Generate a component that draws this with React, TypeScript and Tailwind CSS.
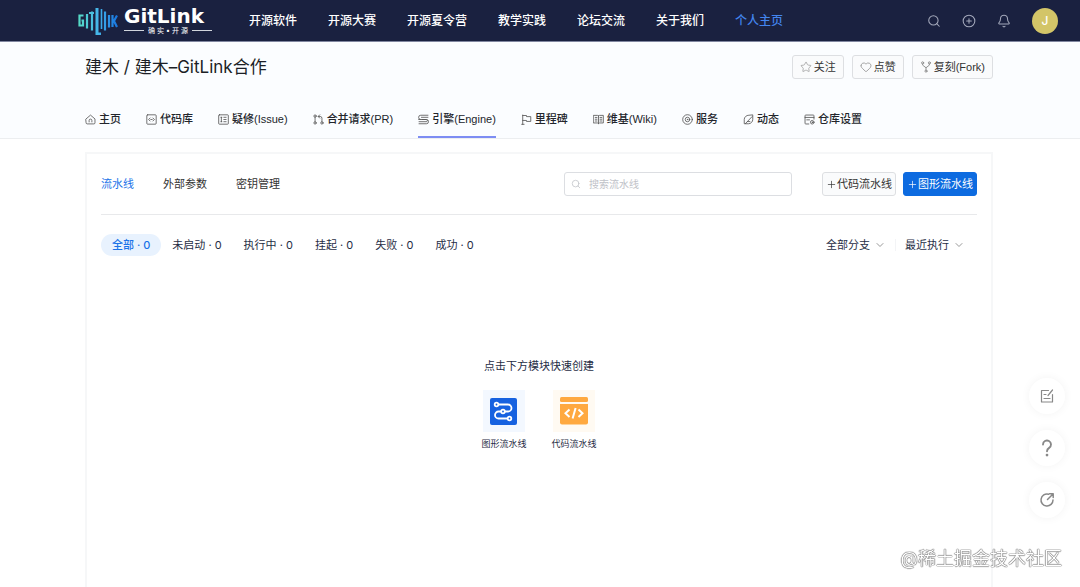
import type { ReactNode } from 'react';
import { Bell, ChevronDown, CirclePlus, Heart, Plus, Search, Star } from 'lucide-react';

const navLinks = ['开源软件', '开源大赛', '开源夏令营', '教学实践', '论坛交流', '关于我们', '个人主页'];

const filters = ['全部', '未启动', '执行中', '挂起', '失败', '成功'];

function Icon({ children, className = 'size-3' }: { children: ReactNode; className?: string }) {
    return (
        <svg
            viewBox="0 0 16 16"
            fill="none"
            stroke="currentColor"
            strokeWidth="1.2"
            strokeLinecap="round"
            strokeLinejoin="round"
            className={`shrink-0 ${className}`}
            aria-hidden="true"
        >
            {children}
        </svg>
    );
}

const repoTabs = [
    {
        label: '主页',
        icon: (
            <>
                <path d="M1.5 7.2 8 1.6l6.5 5.6v5.6a1.6 1.6 0 0 1-1.6 1.6H3.1a1.6 1.6 0 0 1-1.6-1.6z" />
                <path d="M6 11.5V9.4a2 2 0 0 1 4 0v2.1" />
            </>
        ),
    },
    {
        label: '代码库',
        icon: (
            <>
                <rect x="1.2" y="1.2" width="13.6" height="13.6" rx="1.2" />
                <path d="M6 5.8 3.8 8 6 10.2M10 5.8 12.2 8 10 10.2M7 8h2" />
            </>
        ),
    },
    {
        label: '疑修(Issue)',
        icon: (
            <>
                <rect x="1" y="1.2" width="14" height="13.6" rx="1" />
                <path d="M4.2 4.8h1.4M4.9 4.8v6.4M4.2 11.2h1.4M8.5 4.8h3.3M8.5 8h3.3M8.5 11.2h3.3" />
            </>
        ),
    },
    {
        label: '合并请求(PR)',
        icon: (
            <>
                <circle cx="3" cy="3" r="1.7" />
                <circle cx="3" cy="13" r="1.7" />
                <circle cx="13" cy="13" r="1.7" />
                <path d="M3 4.7v6.6M13 11.3V6.2A2.6 2.6 0 0 0 10.4 3.6H7.8M9.8 1.2 7.4 3.6l2.4 2.4" />
            </>
        ),
    },
    {
        label: '引擎(Engine)',
        active: true,
        icon: (
            <>
                <path d="M14.5 1.8H4a2.9 2.9 0 0 0 0 6.2h8a1.6 1.6 0 0 1 0 3.2H1.5" />
                <path d="M14.5 4.8H5M6 8h6.2a3 3 0 0 1 0 6.2H1.5M1 8h2.5" />
            </>
        ),
    },
    {
        label: '里程碑',
        icon: <path d="M2.5 15V1.5M2.5 2.2h5.5v1.6h6.2v7H8V9.4H2.5M1 15h3.5" />,
    },
    {
        label: '维基(Wiki)',
        icon: (
            <>
                <path d="M8 2.5v11.5M1 2h5.5L8 2.8 9.5 2H15v11H9.5L8 14l-1.5-1H1z" />
                <path d="M3.2 5h2.6M3.2 7.6h2.6M3.2 10.2h2.6M10.2 5h2.6M10.2 7.6h2.6M10.2 10.2h2.6" />
            </>
        ),
    },
    {
        label: '服务',
        icon: (
            <>
                <circle cx="8" cy="8" r="7" />
                <circle cx="8" cy="8" r="3.3" />
                <circle cx="8" cy="8" r=".4" />
            </>
        ),
    },
    {
        label: '动态',
        icon: (
            <>
                <path d="M14.2 1.8v6A6.3 6.3 0 0 1 8 14.2H1.8V8A6.2 6.2 0 0 1 8 1.8z" />
                <path d="m3.5 14 9.5-10M6.5 11h3.5" />
            </>
        ),
    },
    {
        label: '仓库设置',
        icon: (
            <>
                <path d="M14.5 7.5v-5a1 1 0 0 0-1-1h-11a1 1 0 0 0-1 1v11a1 1 0 0 0 1 1H7M1.5 5h13M4 8.5h4" />
                <circle cx="12" cy="12" r="2.6" />
                <circle cx="12" cy="12" r=".5" />
            </>
        ),
    },
];

function Logo() {
    return (
        <a href="#" className="mr-[37px] flex w-[134px] shrink-0 items-center gap-[6px]" aria-label="GitLink">
            <svg viewBox="0 0 40 28" className="h-7 w-10 shrink-0" aria-hidden="true">
                <defs>
                    <linearGradient id="mark" x1="0" y1="0" x2="40" y2="0" gradientUnits="userSpaceOnUse">
                        <stop offset="0" stopColor="#55dcc4" />
                        <stop offset=".5" stopColor="#45b5ea" />
                        <stop offset="1" stopColor="#1673df" />
                    </linearGradient>
                </defs>
                <g fill="none" stroke="url(#mark)" strokeWidth="2.2">
                    <path d="M5.5 8.5H1.5v10H5v-5H3.5" />
                    <path d="M9.01 7v14.5" />
                    <path d="M11 6h5M14 4.5v19" />
                    <path d="M19 1v26h4" strokeWidth="3" />
                    <path d="M23.5 2v20" strokeWidth="1.6" />
                    <path d="M27.01 4.5v19" />
                    <path d="M31.01 8v12.5" />
                    <path d="M34.51 8v12M39 8.5 36 14l3 6" />
                </g>
            </svg>
            <span className="flex min-w-0 flex-1 flex-col text-white">
                <span className="font-['DejaVu_Sans'] text-[20px] leading-[18px] font-bold">GitLink</span>
                <span className="mt-0.5 flex items-center gap-1 text-[7px] leading-[8px] whitespace-nowrap">
                    <i className="h-px flex-1 bg-gray-300" />
                    确 实 • 开 源
                    <i className="h-px flex-1 bg-gray-300" />
                </span>
            </span>
        </a>
    );
}

function Header() {
    return (
        <header className="flex h-[42px] items-center border-b border-[#8187a0] bg-[#1a2140] pr-[22px] pl-[78px]">
            <Logo />
            <nav className="flex gap-[31px] text-xs font-medium whitespace-nowrap text-white">
                {navLinks.map((link) => (
                    <a key={link} href="#" className={link === '个人主页' ? 'text-[#4385ee]' : ''}>
                        {link}
                    </a>
                ))}
            </nav>
            <div className="ml-auto flex items-center gap-[21px] text-[#a4a9bb]">
                <button aria-label="搜索">
                    <Search className="size-[14px]" strokeWidth={1.8} />
                </button>
                <button aria-label="新建">
                    <CirclePlus className="size-[14px]" strokeWidth={1.8} />
                </button>
                <button aria-label="消息">
                    <Bell className="size-[14px]" strokeWidth={1.8} />
                </button>
                <button className="size-[26px] rounded-full bg-[#d3c568] text-xs font-medium text-white">J</button>
            </div>
        </header>
    );
}

function RepoHeader() {
    const action = 'flex h-6 items-center gap-[2px] rounded-[3px] border border-[#dddfe2] bg-[#fafbfc] px-[7px] text-[#333]';

    return (
        <section className="border-b border-[#eceef0] bg-[#fbfdff] pt-[13px] pr-[87px] pl-[85px]">
            <div className="flex items-center">
                <h1 className="text-[17px] leading-6 text-[#1c1f26]">建木 / 建木–GitLink合作</h1>
                <div className="ml-auto flex gap-2 font-['Liberation_Sans','Noto_Sans_CJK_SC',sans-serif]">
                    <button className={action}>
                        <Star className="size-3 text-[#999]" strokeWidth={1.5} />
                        关注
                    </button>
                    <button className={action}>
                        <Heart className="size-3 text-[#888]" strokeWidth={1.5} />
                        点赞
                    </button>
                    <button className={action}>
                        <Icon className="size-3 text-[#888]">
                            <circle cx="3.5" cy="2.5" r="1.4" />
                            <circle cx="12.5" cy="2.5" r="1.4" />
                            <circle cx="8" cy="13.5" r="1.4" />
                            <path d="M3.5 4v1.5L8 9l4.5-3.5V4M8 9v3" />
                        </Icon>
                        复刻(Fork)
                    </button>
                </div>
            </div>
            <nav className="mt-[23px] flex gap-[25px] font-['Liberation_Sans','Noto_Sans_CJK_SC',sans-serif] font-medium whitespace-nowrap text-[#22252b]">
                {repoTabs.map((tab) => (
                    <a
                        key={tab.label}
                        href="#"
                        className={`flex items-center gap-[3px] border-b-2 pt-[9px] pb-[9px] leading-4 ${
                            tab.active ? 'border-[#7d8df3]' : 'border-transparent'
                        }`}
                    >
                        <Icon className="size-[11px] text-[#555]">{tab.icon}</Icon>
                        {tab.label}
                    </a>
                ))}
            </nav>
        </section>
    );
}

function Toolbar() {
    return (
        <div className="flex items-center border-b border-[#e8e9eb] py-[18px]">
            <nav className="flex gap-[29px] text-[#333]">
                <a href="#" className="text-[#1b73e8]">流水线</a>
                <a href="#">外部参数</a>
                <a href="#">密钥管理</a>
            </nav>
            <label className="ml-auto flex h-6 w-[228px] items-center gap-2 rounded-[3px] border border-[#dcdee2] bg-white px-1.5 text-[#c4c6cb]">
                <Search className="size-[10px]" aria-hidden="true" />
                <input
                    type="text"
                    aria-label="搜索流水线"
                    placeholder="搜索流水线"
                    className="min-w-0 flex-1 text-[10px] text-[#333] outline-none placeholder:text-[#c0c2c8]"
                />
            </label>
            <button className="ml-[30px] flex h-6 items-center rounded-[3px] border border-[#dddfe2] bg-[#fafbfc] px-[3px] text-[#333]">
                <Plus className="size-[11px]" strokeWidth={1.5} />
                代码流水线
            </button>
            <button className="ml-[7px] flex h-6 items-center rounded-[3px] border border-[#0d6be0] bg-[#0d6be0] px-[3px] text-white">
                <Plus className="size-[11px]" strokeWidth={1.5} />
                图形流水线
            </button>
        </div>
    );
}

function Dropdown({ label, options }: { label: string; options: string[] }) {
    return (
        <label className="flex items-center gap-1">
            <select aria-label={label} className="appearance-none outline-none">
                {options.map((option) => (
                    <option key={option}>{option}</option>
                ))}
            </select>
            <ChevronDown className="size-3 text-[#999]" strokeWidth={2} />
        </label>
    );
}

function FilterBar() {
    return (
        <div className="flex items-center pt-[19px] text-[#1f2d45]">
            {filters.map((name, i) => (
                <button
                    key={name}
                    className={`h-[22px] rounded-full px-[11px] ${i === 0 ? 'bg-[#e8f2fe] font-medium text-[#1b73e8]' : ''}`}
                >
                    {name} · 0
                </button>
            ))}
            <div className="mr-3 ml-auto flex items-center gap-[9px]">
                <Dropdown label="分支" options={['全部分支']} />
                <i className="h-3 w-px bg-gray-100" />
                <Dropdown label="排序" options={['最近执行']} />
            </div>
        </div>
    );
}

function EmptyState() {
    return (
        <div className="mt-[102px] flex flex-col items-center text-[#1f2d45]">
            <p className="leading-4">点击下方模块快速创建</p>
            <div className="mt-4 flex gap-[25px] text-[9px] leading-4">
                <button className="flex flex-col items-center gap-1">
                    <span className="flex size-[42px] items-center justify-center bg-[#f3f8ff]">
                        <svg viewBox="0 0 27 27" className="size-[27px]" aria-hidden="true">
                            <rect width="27" height="27" rx="2" fill="#1762e0" />
                            <g fill="none" stroke="#fff" strokeWidth="1.8">
                                <path d="M8.5 6.5H18a3.5 3.5 0 0 1 0 7h-3M11 13.5H8.5a3.5 3.5 0 0 0 0 7H17" />
                                <circle cx="6.5" cy="6.5" r="1.8" />
                                <circle cx="13" cy="13.5" r="1.8" />
                                <circle cx="19.5" cy="20.5" r="1.8" />
                            </g>
                        </svg>
                    </span>
                    图形流水线
                </button>
                <button className="flex flex-col items-center gap-1">
                    <span className="flex size-[42px] items-center justify-center bg-[#fffaf2]">
                        <svg viewBox="0 0 28 28" className="size-7" aria-hidden="true">
                            <rect width="28" height="5" rx="1.5" fill="#ffa940" />
                            <path d="M0 7h28v18.5a2 2 0 0 1-2 2H2a2 2 0 0 1-2-2z" fill="#ffa940" />
                            <path
                                d="M9.5 12.5 5.5 16.2l4 3.7M18.5 12.5l4 3.7-4 3.7M15.6 11l-3 10.5"
                                fill="none"
                                stroke="#fff"
                                strokeWidth="2"
                            />
                        </svg>
                    </span>
                    代码流水线
                </button>
            </div>
        </div>
    );
}

function SideTools() {
    const round = 'flex size-9 items-center justify-center rounded-full bg-white text-[#888] shadow-[0_0_10px_rgba(0,0,0,0.05)]';

    return (
        <aside className="fixed right-[15px] bottom-[69px] flex flex-col gap-4">
            <button className={round} aria-label="反馈">
                <Icon className="size-4">
                    <path d="M9.5 2.5h-7v11.5h11V6.5M13.5 2 9 7.5M5 6.5h2M5 10.5h6" />
                </Icon>
            </button>
            <button className={round} aria-label="帮助">
                <Icon className="size-5">
                    <path d="M4.8 5.2a3.2 3.2 0 1 1 4.9 2.7C8.6 8.6 8 9.2 8 10.6" strokeWidth="1.5" />
                    <circle cx="8" cy="13.6" r=".5" fill="currentColor" />
                </Icon>
            </button>
            <button className={round} aria-label="分享">
                <Icon className="size-4">
                    <path d="M9.5 2.2A6 6 0 1 0 14 8M8.5 7.5 14 2M10.5 1.8h3.7v3.7" strokeWidth="1.5" />
                </Icon>
            </button>
        </aside>
    );
}

export default function App() {
    return (
        <div className="flex min-h-screen flex-col bg-white font-['Inter','Noto_Sans_CJK_SC',sans-serif] text-[11px]">
            <Header />
            <RepoHeader />
            <main className="flex flex-1 flex-col pt-[13px] pr-[87px] pl-[85px]">
                <div className="flex-1 border-2 border-b-0 border-[#f6f7f8] px-[14px]">
                    <Toolbar />
                    <FilterBar />
                    <EmptyState />
                </div>
            </main>
            <SideTools />
            <p className="pointer-events-none fixed right-[18px] bottom-4 text-lg leading-6 text-white [text-shadow:0_0_1px_#444,0_0_1px_#555,0_0_1px_#777]">
                @稀土掘金技术社区
            </p>
        </div>
    );
}
